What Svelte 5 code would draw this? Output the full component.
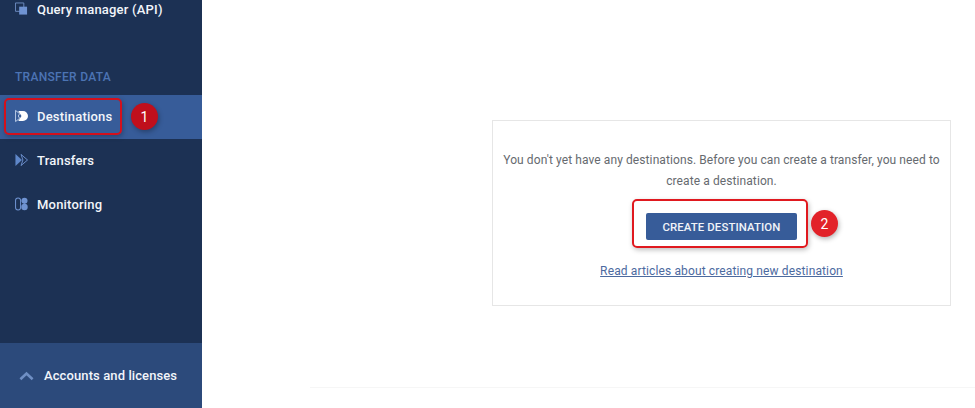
<script>
	const items = [
		{ name: 'Destinations', icon: 'dest', active: true },
		{ name: 'Transfers', icon: 'transfers' },
		{ name: 'Monitoring', icon: 'monitoring' }
	];
</script>

<div class="page">
	<aside class="sidebar">
		<nav class="nav">
			<a class="item query">
				<svg class="icon" viewBox="0 0 14 14">
					<path d="M.5.5h9v9h-9z" fill="none" stroke="#6f8fc4" stroke-width="1" />
					<path d="M4.5 4.5h8.5v8.5H4.500z" fill="#6f93d2" />
				</svg>
				<span>Query manager (API)</span>
			</a>
			<div class="section">TRANSFER DATA</div>
			{#each items as item}
				<a class="item" class:active={item.active}>
					<svg class="icon" viewBox="0 0 14 14">
						{#if item.icon === 'dest'}
							<path d="M.6 1v12L5 9.500 3.500 7 5 4.500z" fill="none" stroke="#c3d2ec" stroke-width="1" />
							<path d="M3.500 1.500h5a5.500 5.500 0 0 1 0 11h-5L7 7z" fill="#fff" />
						{:else if item.icon === 'transfers'}
							<path d="M.5.500L7.500 7 .5 13.500z" fill="#5f87c9" />
							<path d="M6.500 1l7 6-7 6 2-6z" fill="none" stroke="#6f93d2" stroke-width="1" />
						{:else}
							<rect x=".6" y=".6" width="5.400" height="12.800" rx="2.700" fill="none" stroke="#6f93d2" stroke-width="1.100" />
							<circle cx="10.200" cy="3.600" r="3.300" fill="#6f93d2" />
							<circle cx="10.200" cy="10.300" r="3.500" fill="#6f93d2" />
						{/if}
					</svg>
					<span>{item.name}</span>
				</a>
			{/each}
			<span class="mark mark-one"></span>
			<span class="badge badge-one">1</span>
		</nav>
		<div class="accounts">
			<svg class="chevron" viewBox="0 0 16 10">
				<path d="M1.500 8.500L8 2.500l6.500 6" fill="none" stroke="#6f8fc4" stroke-width="2.800" />
			</svg>
			<span>Accounts and licenses</span>
		</div>
	</aside>

	<main class="main">
		<section class="card">
			<p>You don't yet have any destinations. Before you can create a transfer, you need to create a destination.</p>
			<div class="action">
				<button>CREATE DESTINATION</button>
				<span class="mark mark-two"></span>
				<span class="badge badge-two">2</span>
			</div>
			<a class="link">Read articles about creating new destination</a>
		</section>
		<div class="rule"></div>
	</main>
</div>

<style>
	:global(body) { margin: 0; background: #fff; }
	.page { display: flex; width: 975px; height: 408px; overflow: hidden; font-family: Roboto, "Liberation Sans", sans-serif; }
	.sidebar { width: 202px; flex: none; background: #1c3154; display: flex; flex-direction: column; overflow: hidden; }
	.nav { flex: 1; position: relative; margin-top: -13px; }
	.item { height: 44px; display: flex; align-items: center; gap: 9px; padding: 0 0 2px 15px; color: #f2f5fa; font-size: 13px; font-weight: 500; letter-spacing: 0.2px; box-sizing: border-box; }
	.item.query { padding-bottom: 0; }
	.item.active { background: #375c99; }
	.icon { width: 13px; height: 14px; flex: none; }
	.section { margin: 37px 0 9px; height: 18px; line-height: 18px; padding-left: 15px; color: #4c74b4; font-size: 12px; font-weight: 500; letter-spacing: 0.3px; }
	.accounts { height: 65px; flex: none; background: #2c4a7b; display: flex; align-items: center; gap: 10px; padding-left: 19px; color: #f2f5fa; font-size: 13px; font-weight: 500; letter-spacing: 0.1px; }
	.chevron { width: 15px; height: 10px; }

	.main { flex: 1; position: relative; display: flex; flex-direction: column; padding: 120px 24px 0 290px; }
	.card { height: 186px; box-sizing: border-box; border: 1px solid #e6e6e6; padding: 29px 8px 0; text-align: center; color: #666a6f; font-size: 12px; }
	.card p { margin: 0; line-height: 21px; letter-spacing: 0.09px; }
	.action { position: relative; margin-top: 21px; display: flex; justify-content: center; }
	button { width: 151px; height: 27px; padding: 0; border: 0; border-radius: 2px; background: #375c99; color: #f0f3f8; font: 500 11.4px Roboto, "Liberation Sans", sans-serif; letter-spacing: 0.1px; }
	.link { display: block; margin-top: 22px; line-height: 18px; color: #4c6a9f; text-decoration: underline; letter-spacing: 0.13px; }
	.rule { position: absolute; left: 108px; right: 0; top: 387px; height: 1px; background: #f6f6f6; }

	.mark { position: absolute; box-sizing: border-box; border: 2px solid #e0191f; border-radius: 5px; box-shadow: 1px 2px 5px rgba(0, 0, 0, 0.25); }
	.mark-one { left: 4px; top: 111px; width: 118px; height: 37px; border-color: #d4101c; }
	.mark-two { left: 131px; top: -14px; width: 176px; height: 49px; }
	.badge { position: absolute; width: 27px; height: 27px; border-radius: 50%; display: flex; align-items: center; justify-content: center; color: #fff; font-size: 14px; box-shadow: 1px 2px 5px rgba(0, 0, 0, 0.3); }
	.badge-one { left: 131px; top: 116px; background: #c00f1c; }
	.badge-two { left: 310px; top: -3px; background: #e22229; }
</style>
